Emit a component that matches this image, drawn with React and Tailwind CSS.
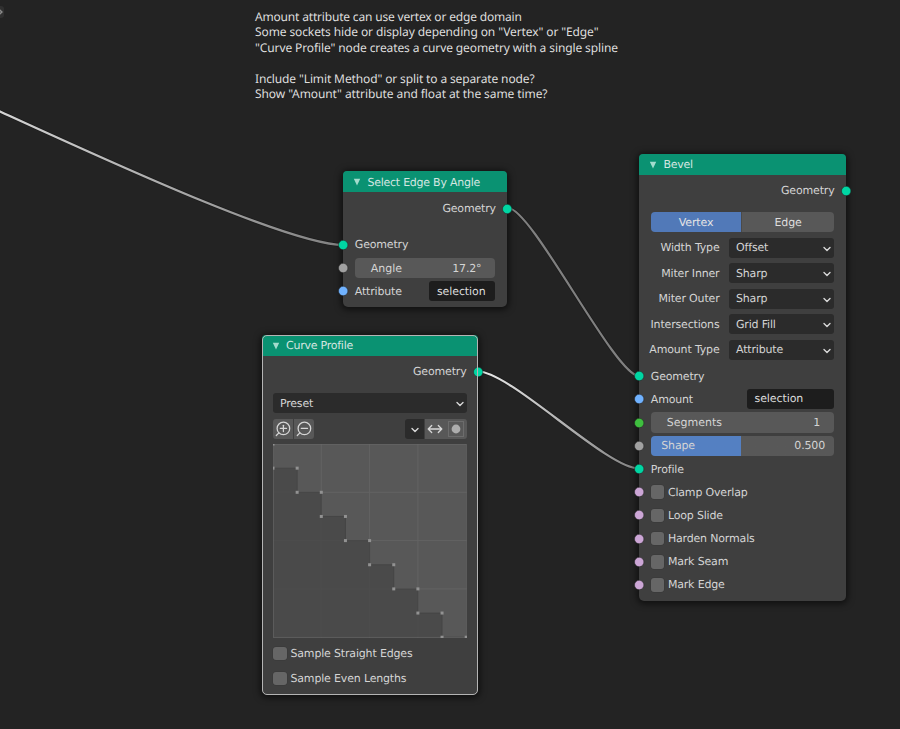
import React from "react";

const SOCKET_COLORS = {
  geometry: "fill-[#00d6a3]",
  float: "fill-[#a1a1a1]",
  string: "fill-[#70b2ff]",
  integer: "fill-[#3fbf3f]",
  boolean: "fill-[#cca6d6]",
};

function Socket({ type, side = "left" }) {
  const place = side === "left" ? "-left-[6px]" : "-right-[6px]";
  return (
    <svg viewBox="0 0 12 12" className={`absolute top-1/2 size-[12px] -translate-y-1/2 ${place} ${SOCKET_COLORS[type]}`}>
      <circle cx="6.2" cy="6" r="4.7" stroke="#1f1f1f" strokeWidth="0.5" />
    </svg>
  );
}

function Node({ title, className, titleClass = "", selected = false, children }) {
  return (
    <section
      className={`absolute flex flex-col rounded-[5px] bg-[#3f3f3f] shadow-[0_1px_6px_2px_rgba(0,0,0,0.55)] ${className}`}
    >
      <header className="flex h-[21px] shrink-0 items-center rounded-t-[4px] bg-[#0a9272] pt-px pl-[10px]">
        <svg viewBox="0 0 8 8" className="size-[8px] fill-[#a3dccd]">
          <path d="M0.8 0.8h6.4L4 7.6z" />
        </svg>
        <h2 className={`ml-[6px] leading-none tracking-[-0.24px] text-[#d4e6e1] ${titleClass}`}>{title}</h2>
      </header>
      {children}
      {selected && (
        <div className="pointer-events-none absolute inset-0 rounded-[5px] border border-[#b4b4b4]" />
      )}
    </section>
  );
}

function Output({ className }) {
  return (
    <div className={`relative flex shrink-0 items-center justify-end pr-[11.5px] ${className}`}>
      Geometry
      <Socket type="geometry" side="right" />
    </div>
  );
}

function Input({ type, children }) {
  return (
    <div className="relative flex h-[23.2px] shrink-0 items-center pr-[12px] pl-[11.4px]">
      <Socket type={type} />
      {children}
    </div>
  );
}

function Chevron({ className = "" }) {
  return (
    <svg viewBox="0 0 8 6" className={`h-[6px] w-[8px] fill-none stroke-[#d8d8d8] stroke-[1.4] ${className}`}>
      <path d="M1 1.4 4 4.4 7 1.4" strokeLinecap="round" strokeLinejoin="round" />
    </svg>
  );
}

function Dropdown({ value, className }) {
  return (
    <div className={`flex shrink-0 items-center justify-between rounded-[3px] bg-[#2b2b2b] pr-[3px] pl-[6.5px] ${className}`}>
      {value}
      <Chevron className="mt-[2px]" />
    </div>
  );
}

function TextField({ value, className }) {
  return (
    <div className={`ml-auto flex h-[20px] items-center rounded-[3px] bg-[#1d1d1d] pl-[7.5px] tracking-[-0.08px] text-[#dcdcdc] ${className}`}>
      {value}
    </div>
  );
}

function NumberField({ label, value }) {
  return (
    <div className="flex h-[20.5px] flex-1 items-center justify-between rounded-[4px] bg-[#585858] pr-[14px] pl-[16px]">
      <span className="tracking-normal">{label}</span>
      <span>{value}</span>
    </div>
  );
}

function Checkbox({ label }) {
  return (
    <div className="flex items-center gap-[3.6px]">
      <span className="size-[13.5px] rounded-[3px] bg-[#666666] shadow-[0_0_0_0.5px_#383838]" />
      {label}
    </div>
  );
}

const OPTIONS = [
  ["Width Type", "Offset"],
  ["Miter Inner", "Sharp"],
  ["Miter Outer", "Sharp"],
  ["Intersections", "Grid Fill"],
  ["Amount Type", "Attribute"],
];

const FLAGS = ["Clamp Overlap", "Loop Slide", "Harden Normals", "Mark Seam", "Mark Edge"];

const STEP = 24.15;
const PROFILE = [[0, 0], [0, 1], [1, 1], [1, 2], [2, 2], [2, 3], [3, 3], [3, 4], [4, 4], [4, 5], [5, 5], [5, 6], [6, 6], [6, 7], [7, 7], [7, 8], [8, 8]];

function ProfileGraph() {
  const points = PROFILE.map(([x, y]) => `${x * STEP},${y * STEP}`).join(" ");
  return (
    <svg viewBox="0 0 193.5 193.5" className="mt-[5px] ml-[11.4px] h-[193.5px] w-[193.5px] shrink-0">
      <rect width="193.5" height="193.5" fill="#585858" />
      {[1, 2, 3].map((i) => (
        <g key={i} stroke="#636363">
          <path d={`M${i * 2 * STEP} 0V193.5`} />
          <path d={`M0 ${i * 2 * STEP}H193.5`} />
        </g>
      ))}
      <polygon points={`${points} 0,193.5`} fill="#484848" fillOpacity="0.86" />
      <polyline points={points} fill="none" stroke="#424242" strokeWidth="0.8" />
      <rect x="0.25" y="0.25" width="193" height="193" fill="none" stroke="#6a6a6a" strokeWidth="0.6" />
      {PROFILE.map(([x, y]) => (
        <rect key={`${x}-${y}`} x={x * STEP - 1.5} y={y * STEP - 1.5} width="3" height="3" fill="#929292" />
      ))}
    </svg>
  );
}

function ZoomIcon({ plus }) {
  return (
    <svg viewBox="0 0 20 20" className="size-[20px] fill-none stroke-[#d6d6d6] stroke-[1.25]">
      <circle cx="10.4" cy="9.4" r="6.3" />
      <path d="M5.9 13.9 3.3 16.5M7.3 9.4h6.2" strokeLinecap="round" />
      {plus && <path d="M10.4 6.3v6.2" strokeLinecap="round" />}
    </svg>
  );
}

function ProfileToolbar() {
  return (
    <div className="mt-[6px] mr-[11.4px] ml-[11.4px] flex h-[20px] shrink-0 justify-between">
      <div className="flex gap-[0.6px]">
        <span className="w-[20px] rounded-l-[3px] bg-[#585858]"><ZoomIcon plus /></span>
        <span className="w-[20px] rounded-r-[3px] bg-[#585858]"><ZoomIcon /></span>
      </div>
      <div className="flex gap-[0.6px]">
        <span className="flex w-[19.6px] items-center justify-center rounded-l-[3px] bg-[#2b2b2b]">
          <Chevron className="mt-[2px]" />
        </span>
        <span className="flex w-[20.6px] items-center justify-center bg-[#585858]">
          <svg viewBox="0 0 16 10" className="h-[10px] w-[16px] fill-none stroke-[#d6d6d6] stroke-[1.3]">
            <path d="M1.2 5h13.6M4.7 1.5 1.2 5l3.5 3.5M11.3 1.5 14.8 5l-3.5 3.5" strokeLinecap="round" strokeLinejoin="round" />
          </svg>
        </span>
        <span className="flex w-[20.4px] items-center justify-center rounded-r-[3px] bg-[#585858]">
          <svg viewBox="0 0 16 16" className="size-[16px] fill-none">
            <rect x="0.5" y="0.5" width="15" height="15" stroke="#6c6c6c" />
            <circle cx="8" cy="8" r="4.4" fill="#adadad" />
          </svg>
        </span>
      </div>
    </div>
  );
}

function Wires() {
  return (
    <svg viewBox="0 0 900 729" className="absolute inset-0 h-[729px] w-[900px] fill-none">
      <defs>
        <linearGradient id="incoming" gradientUnits="userSpaceOnUse" x1="0" y1="0" x2="343" y2="0">
          <stop offset="0" stopColor="#d4d4d4" />
          <stop offset="1" stopColor="#808080" />
        </linearGradient>
        <linearGradient id="outgoing" gradientUnits="userSpaceOnUse" x1="478" y1="0" x2="639" y2="0">
          <stop offset="0" stopColor="#ececec" />
          <stop offset="1" stopColor="#808080" />
        </linearGradient>
      </defs>
      {[
        ["M-5 109.2L0 111.5C90 152.4 288 245 343.5 245", "url(#incoming)"],
        ["M508 208C532 208 615 376 639 376", "#808080"],
        ["M478 371.5C510.5 371.5 606.5 468.5 639 468.5", "url(#outgoing)"],
      ].map(([d, stroke]) => (
        <g key={d}>
          <path d={d} stroke="#1b1b1b" strokeWidth="3.6" />
          <path d={d} stroke={stroke} strokeWidth="2.2" />
        </g>
      ))}
    </svg>
  );
}

export default function App() {
  return (
    <main className="relative h-[729px] w-[900px] overflow-hidden bg-[#232323] font-['DejaVu_Sans',sans-serif] text-[11px] leading-none tracking-[-0.17px] whitespace-nowrap text-[#d4d4d4] [text-rendering:geometricPrecision]">
      <div className="absolute top-[6px] -left-[6px] flex h-[12px] w-[10px] items-center justify-end rounded-[3px] bg-[#303030]">
        <svg viewBox="0 0 4 6" className="mr-[1px] h-[6px] w-[4px] fill-none stroke-[#8a8a8a] stroke-[1.5]">
          <path d="M0.5 0.8 3 3 0.5 5.2" />
        </svg>
      </div>

      <div className="absolute top-[8.5px] left-[255px] font-['Noto_Sans',sans-serif] text-[12px] leading-[15.5px] tracking-[-0.11px] whitespace-pre text-[#dedede]">
        <p className="tracking-[-0.18px]">Amount attribute can use vertex or edge domain</p>
        <p>Some sockets hide or display depending on "Vertex" or "Edge"</p>
        <p>"Curve Profile" node creates a curve geometry with a single spline</p>
        <p> </p>
        <p className="tracking-[-0.13px]">Include "Limit Method" or split to a separate node?</p>
        <p className="tracking-[-0.09px]">Show "Amount" attribute and float at the same time?</p>
      </div>

      <Wires />

      <Node title="Select Edge By Angle" className="top-[171px] left-[343.4px] h-[136px] w-[164px]">
        <Output className="h-[33px]" />
        <div className="mt-[8.4px]">
          <Input type="geometry">Geometry</Input>
          <Input type="float"><NumberField label="Angle" value="17.2°" /></Input>
          <Input type="string">
            Attribute
            <TextField value="selection" className="w-[66px]" />
          </Input>
        </div>
      </Node>

      <Node title="Curve Profile" selected className="top-[334.5px] left-[262px] h-[360px] w-[216px]">
        <Output className="h-[32px]" />
        <Dropdown value="Preset" className="mt-[5.5px] mr-[11px] ml-[11.4px] h-[20px]" />
        <ProfileToolbar />
        <ProfileGraph />
        <div className="mt-[9px] ml-[11.4px] flex flex-col gap-[11.5px]">
          <Checkbox label="Sample Straight Edges" />
          <Checkbox label="Sample Even Lengths" />
        </div>
      </Node>

      <Node title="Bevel" titleClass="pb-[2px]" className="top-[154px] left-[639.4px] h-[447px] w-[206.6px]">
        <Output className="h-[31px]" />
        <div className="mt-[6px] mr-[12px] ml-[11.4px] flex h-[20px] shrink-0 overflow-hidden rounded-[4px] tracking-[-0.1px] text-[#e4e4e4]">
          <span className="flex w-[90.5px] items-center justify-center bg-[#5179b8]">Vertex</span>
          <span className="flex flex-1 items-center justify-center border-l border-[#4a4a4a] bg-[#585858] text-[#dedede]">Edge</span>
        </div>
        <div className="mt-[5.5px] mr-[12px] ml-[11.4px] flex flex-col gap-[5.6px]">
          {OPTIONS.map(([label, value]) => (
            <div key={label} className="flex h-[20px] items-center justify-end gap-[10px]">
              {label}
              <Dropdown value={value} className="h-[20px] w-[104.5px]" />
            </div>
          ))}
        </div>
        <div className="mt-[4.8px]">
          <Input type="geometry">Geometry</Input>
          <Input type="string">
            Amount
            <TextField value="selection" className="w-[87px] pb-px" />
          </Input>
          <Input type="integer"><NumberField label="Segments" value="1" /></Input>
          <Input type="float">
            <div className="flex h-[20.5px] flex-1 items-center justify-between rounded-[4px] bg-linear-to-r from-[#5480c2] from-49% to-[#585858] to-49% pr-[9px] pl-[10.5px]">
              <span>Shape</span>
              <span>0.500</span>
            </div>
          </Input>
          <Input type="geometry">Profile</Input>
          {FLAGS.map((label) => (
            <Input key={label} type="boolean"><Checkbox label={label} /></Input>
          ))}
        </div>
      </Node>
    </main>
  );
}
